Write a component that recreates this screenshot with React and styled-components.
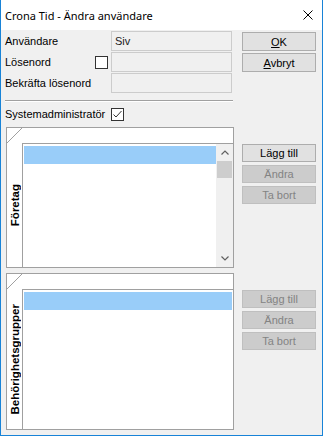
import React from 'react';
import styled, { createGlobalStyle } from 'styled-components';

const GlobalStyle = createGlobalStyle`
  body {
    margin: 0;
    font-family: 'Liberation Sans', Arial, sans-serif;
    font-size: 11px;
    color: #000;
    background: #fff;
  }
`;

const Window = styled.div`
  width: 323px;
  height: 436px;
  box-sizing: border-box;
  border: 1px solid #1883d7;
  border-top: none;
  display: flex;
  flex-direction: column;
  background: #f0f0f0;
  white-space: nowrap;
`;

const TitleBar = styled.div`
  height: 30px;
  flex: none;
  background: #fff;
  display: flex;
  align-items: center;
  justify-content: space-between;
  padding: 0 9px 0 4px;
  font-family: 'Noto Sans', 'Segoe UI', sans-serif;
  font-size: 11px;
`;

const Body = styled.div`
  flex: 1;
  display: flex;
  flex-direction: column;
  padding: 1px 0 0 4px;
`;

const TopRow = styled.div`
  display: flex;
  align-items: flex-start;
`;

const Form = styled.div`
  display: grid;
  grid-template-columns: 90px 16px 121px;
  grid-auto-rows: 20px;
  row-gap: 1px;
  align-items: center;
`;

const TextBox = styled.div`
  height: 20px;
  box-sizing: border-box;
  border: 1px solid #cccccc;
  background: #f0f0f0;
  padding: 0 3px;
  display: flex;
  align-items: center;
  color: #222;
`;

const CheckBoxBox = styled.div`
  width: 13px;
  height: 13px;
  box-sizing: border-box;
  border: 1px solid #333;
  background: #fff;
  display: flex;
  align-items: center;
  justify-content: center;
`;

const ButtonStack = styled.div`
  display: flex;
  flex-direction: column;
  gap: ${(p) => p.gap || 2}px;
  padding-top: ${(p) => p.top || 1}px;
  margin-left: ${(p) => p.left || 10}px;
`;

const Button = styled.div`
  width: 74px;
  height: ${(p) => p.h || 19}px;
  box-sizing: border-box;
  border: 1px solid ${(p) => (p.disabled ? '#bfbfbf' : '#adadad')};
  background: ${(p) => (p.disabled ? '#cccccc' : '#e1e1e1')};
  color: ${(p) => (p.disabled ? '#838383' : '#000')};
  display: flex;
  align-items: center;
  justify-content: center;
`;

const Separator = styled.div`
  width: 228px;
  height: 1px;
  margin-top: 7px;
  background: #a0a0a0;
  border-bottom: 1px solid #fff;
`;

const SysRow = styled.div`
  display: flex;
  align-items: center;
  height: 20px;
  margin-top: 2px;
`;

const SysLabel = styled.span`
  width: 106px;
`;

const PanelRow = styled.div`
  display: flex;
  align-items: flex-start;
  margin-top: ${(p) => p.top}px;
`;

const Panel = styled.div`
  width: 228px;
  height: ${(p) => p.h}px;
  box-sizing: border-box;
  margin-left: 1px;
  border: 1px solid #a0a0a0;
  background: #fff;
  display: grid;
  grid-template-columns: 15px 1fr;
  grid-template-rows: 15px 1fr;
`;

const Corner = styled.div`
  background: linear-gradient(
    to bottom right,
    transparent calc(50% - 0.6px),
    #a0a0a0 50%,
    transparent calc(50% + 0.6px)
  );
`;

const HeaderFill = styled.div``;

const SideLabel = styled.div`
  display: flex;
  align-items: center;
  justify-content: center;
  font-weight: 700;
  font-size: 11.5px;
  span {
    writing-mode: vertical-rl;
    transform: rotate(180deg);
  }
`;

const List = styled.div`
  border-top: 1px solid #a0a0a0;
  border-left: 1px solid #a0a0a0;
  display: flex;
  min-height: 0;
`;

const Items = styled.div`
  flex: 1;
  padding: 1px ${(p) => (p.scroll ? 0 : 1)}px 0 1px;
`;

const SelectedRow = styled.div`
  height: 18px;
  margin-top: 1px;
  background: #99cdf9;
`;

const ScrollBar = styled.div`
  width: 17px;
  background: #f0f0f0;
  display: flex;
  flex-direction: column;
`;

const ScrollArrow = styled.div`
  height: 17px;
  display: flex;
  align-items: center;
  justify-content: center;
  margin-top: ${(p) => (p.bottom ? 'auto' : '0')};
`;

const ScrollThumb = styled.div`
  height: 17px;
  margin: 0 1px;
  background: #cdcdcd;
`;

const Check = ({ checked }) => (
  <CheckBoxBox>
    {checked && (
      <svg width="11" height="11" viewBox="0 0 11 11">
        <polyline points="1.5,5.5 4,8 9.5,2" fill="none" stroke="#333" strokeWidth="1" />
      </svg>
    )}
  </CheckBoxBox>
);

const Chevron = ({ up }) => (
  <svg width="8" height="5" viewBox="0 0 8 5">
    <polyline
      points={up ? '0.5,4.5 4,1 7.5,4.5' : '0.5,0.5 4,4 7.5,0.5'}
      fill="none"
      stroke="#606060"
      strokeWidth="1.2"
    />
  </svg>
);

const App = () => (
  <>
    <GlobalStyle />
    <Window>
      <TitleBar>
        <span>Crona Tid - Ändra användare</span>
        <svg width="10" height="10" viewBox="0 0 10 10">
          <path d="M0.5 0.5 L9.5 9.5 M9.5 0.5 L0.5 9.5" stroke="#000" strokeWidth="1" />
        </svg>
      </TitleBar>
      <Body>
        <TopRow>
          <Form>
            <span>Användare</span>
            <span />
            <TextBox>Siv</TextBox>
            <span>Lösenord</span>
            <Check />
            <TextBox />
            <span>Bekräfta lösenord</span>
            <span />
            <TextBox />
          </Form>
          <ButtonStack>
            <Button>
              <span><u>O</u>K</span>
            </Button>
            <Button>
              <span><u>A</u>vbryt</span>
            </Button>
          </ButtonStack>
        </TopRow>
        <Separator />
        <SysRow>
          <SysLabel>Systemadministratör</SysLabel>
          <Check checked />
        </SysRow>

        <PanelRow top={3}>
          <Panel h={141}>
            <Corner />
            <HeaderFill />
            <SideLabel><span>Företag</span></SideLabel>
            <List>
              <Items scroll>
                <SelectedRow />
              </Items>
              <ScrollBar>
                <ScrollArrow><Chevron up /></ScrollArrow>
                <ScrollThumb />
                <ScrollArrow bottom><Chevron /></ScrollArrow>
              </ScrollBar>
            </List>
          </Panel>
          <ButtonStack top={17} gap={3} left={8}>
            <Button h={18}>Lägg till</Button>
            <Button h={18} disabled>Ändra</Button>
            <Button h={18} disabled>Ta bort</Button>
          </ButtonStack>
        </PanelRow>

        <PanelRow top={5}>
          <Panel h={157}>
            <Corner />
            <HeaderFill />
            <SideLabel><span>Behörighetsgrupper</span></SideLabel>
            <List>
              <Items>
                <SelectedRow />
              </Items>
            </List>
          </Panel>
          <ButtonStack top={17} gap={3} left={8}>
            <Button h={18} disabled>Lägg till</Button>
            <Button h={18} disabled>Ändra</Button>
            <Button h={18} disabled>Ta bort</Button>
          </ButtonStack>
        </PanelRow>
      </Body>
    </Window>
  </>
);

export default App;
